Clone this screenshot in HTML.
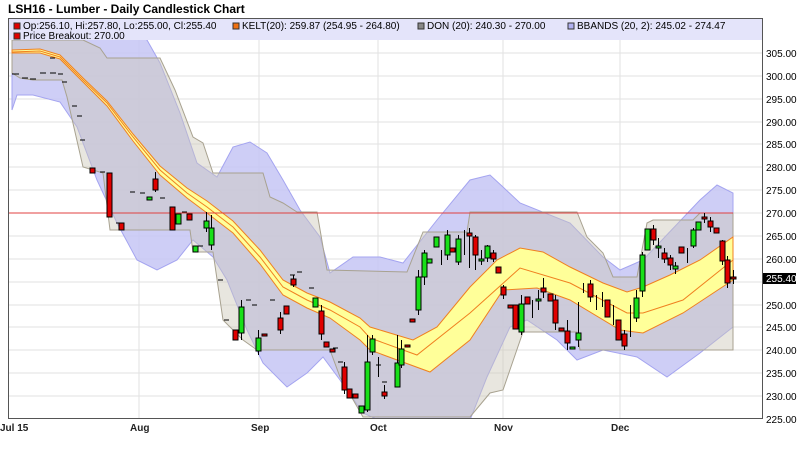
<!DOCTYPE html>
<html><head><meta charset="utf-8"><style>
body{margin:0;background:#fff;width:800px;height:454px;overflow:hidden;font-family:"Liberation Sans",sans-serif}
.r{fill:#e00000;stroke:#000}.g{fill:#18e018;stroke:#000}
</style></head><body>
<svg width="800" height="454" xmlns="http://www.w3.org/2000/svg" font-family="Liberation Sans, sans-serif">
<text x="8" y="13" font-size="12" font-weight="bold" fill="#000">LSH16 - Lumber - Daily Candlestick Chart</text>
<defs><clipPath id="c"><rect x="8" y="18" width="755" height="401"/></clipPath></defs>
<g clip-path="url(#c)">
<rect x="8" y="18" width="755" height="401" fill="#fff"/>
<g stroke="#e2e2e2" stroke-width="1">
<line x1="8" x2="763" y1="53" y2="53"/><line x1="8" x2="763" y1="76" y2="76"/><line x1="8" x2="763" y1="99" y2="99"/><line x1="8" x2="763" y1="122" y2="122"/><line x1="8" x2="763" y1="144" y2="144"/><line x1="8" x2="763" y1="167" y2="167"/><line x1="8" x2="763" y1="190" y2="190"/><line x1="8" x2="763" y1="213" y2="213"/><line x1="8" x2="763" y1="236" y2="236"/><line x1="8" x2="763" y1="259" y2="259"/><line x1="8" x2="763" y1="282" y2="282"/><line x1="8" x2="763" y1="305" y2="305"/><line x1="8" x2="763" y1="327" y2="327"/><line x1="8" x2="763" y1="350" y2="350"/><line x1="8" x2="763" y1="373" y2="373"/><line x1="8" x2="763" y1="396" y2="396"/>
<line x1="139" x2="139" y1="18" y2="419"/><line x1="259" x2="259" y1="18" y2="419"/><line x1="378" x2="378" y1="18" y2="419"/><line x1="503" x2="503" y1="18" y2="419"/><line x1="620" x2="620" y1="18" y2="419"/>
</g>
<!-- Bollinger -->
<path d="M12,10 L47,20 L100,15 L147,40 L160,63 L180,113 L197,163 L217,177 L233,147 L250,142 L267,153 L283,180 L300,210 L320,237 L330,273 L353,257 L380,257 L403,263 L437,220 L470,180 L490,175 L503,187 L520,203 L570,223 L603,257 L620,270 L643,260 L700,200 L717,185 L733,193 L733,327 L700,353 L667,377 L637,357 L603,350 L577,360 L557,340 L527,320 L510,327 L487,377 L470,420 L440,440 L400,430 L363,413 L340,380 L323,357 L307,373 L287,387 L263,363 L247,330 L227,280 L213,257 L193,240 L177,260 L157,270 L137,260 L117,223 L97,180 L77,127 L60,102 L33,95 L17,95 L12,110 Z" fill="#c6c6f4" fill-opacity="0.85" stroke="#a4a4f0"/>
<!-- Donchian -->
<path d="M12,40 L83,40 L100,48 L107,58 L160,58 L175,90 L193,137 L203,143 L213,173 L263,173 L270,197 L283,203 L297,212 L317,212 L327,270 L407,272 L423,232 L467,232 L470,212 L577,212 L587,237 L603,253 L613,277 L637,277 L647,223 L653,220 L693,220 L700,213 L733,213 L733,350 L580,350 L577,332 L523,332 L503,390 L490,393 L470,417 L363,417 L340,377 L330,350 L257,350 L243,340 L223,320 L213,252 L193,252 L190,230 L110,230 L103,173 L83,167 L67,97 L62,80 L33,80 L20,78 L12,73 Z" fill="#cdc8b8" fill-opacity="0.45" stroke="#a8a290"/>
<!-- Keltner -->
<path d="M12,50 L40,49 L60,55 L83,78 L107,101 L133,134 L160,166 L187,188 L207,201 L233,221 L260,250 L283,280 L307,293 L330,302 L360,318 L370,327 L413,340 L437,327 L470,287 L497,260 L520,248 L543,252 L570,267 L603,283 L627,292 L643,287 L670,275 L700,260 L733,237 L733,280 L683,313 L643,333 L620,330 L570,300 L537,288 L503,290 L470,340 L430,372 L370,350 L360,340 L330,318 L307,308 L283,295 L260,264 L233,233 L207,213 L187,198 L160,175 L133,141 L107,106 L83,82 L60,59 L40,53 L12,53 Z" fill="#ffff99" stroke="#f08020"/>
<path d="M12,52 L40,51 L60,57 L83,80 L107,103 L133,137 L160,170 L187,193 L207,207 L233,227 L260,257 L283,287 L307,300 L330,310 L360,327 L370,338 L417,355 L470,313 L520,268 L570,283 L627,313 L643,313 L683,300 L733,260" fill="none" stroke="#f08020"/>
<line x1="8" x2="733" y1="213" y2="213" stroke="#e04040"/>
<!-- candles -->
<g stroke="#000" stroke-width="1">
<path d="M12,74h7M22,78h6M30,79h6M40,73h6M50,73h6M58,74h5M50,58h5M62,82h5M72,106h5M77,116h5M80,140h5M100,172h5M116,223h5M130,192h5M140,193h5M160,198h5M182,212h5M198,246h5M218,280h5M224,320h5M246,300h5M252,305h5M270,300h5M290,275h5M297,272h5M309,288h5M333,348h5M338,362h5M376,365h5M382,382h5"/>
<path d="M155.5,172v20M211.5,215v35M206.5,212v20M241.5,300v40M258.5,330v25M280.5,312v22M293.5,275v12M321.5,305v35M344.5,362v32M367.5,335v77M372.5,335v20M378.5,357v20M384.5,385v14M397.5,335v30M401.5,340v28M418.5,270v45M424.5,250v35M441.5,250v15M447.5,230v30M458.5,235v30M464.5,230v25M469.5,228v40M475.5,235v35M481.5,250v15M487.5,245v17M493.5,250v12M503.5,285v14M521.5,295v40M532.5,300v18M538.5,290v20M543.5,278v20M555.5,295v35M567.5,320v30M578.5,302v45M583.5,283v10M590.5,280v22M596.5,295v15M602.5,292v15M613.5,305v20M624.5,330v20M630.5,305v32M636.5,290v32M642.5,252v45M653.5,225v20M658.5,238v20M664.5,248v15M670.5,255v15M675.5,262v12M687.5,248v15M693.5,228v20M704.5,213v10M710.5,217v15M722.5,240v25M727.5,256v32M733.5,270v14"/>
<rect class="r" x="90" y="168" width="5" height="5"/><rect class="r" x="107" y="173" width="5" height="44"/><rect class="r" x="119" y="223" width="5" height="7"/><rect class="g" x="147" y="197" width="5" height="3"/><rect class="r" x="153" y="179" width="5" height="11"/><rect class="r" x="170" y="207" width="5" height="23"/><rect class="g" x="176" y="214" width="5" height="10"/><rect class="r" x="187" y="214" width="5" height="6"/><rect class="g" x="193" y="246" width="5" height="6"/><rect class="g" x="204" y="221" width="5" height="7"/><rect class="g" x="209" y="228" width="5" height="17"/>
<rect class="r" x="233" y="330" width="5" height="10"/><rect class="g" x="239" y="307" width="5" height="26"/><rect class="g" x="256" y="338" width="5" height="13"/><rect class="r" x="262" y="334" width="5" height="2"/><rect class="r" x="278" y="318" width="5" height="12"/><rect class="r" x="284" y="306" width="5" height="8"/><rect class="r" x="291" y="279" width="5" height="6"/><rect class="g" x="313" y="298" width="5" height="9"/><rect class="r" x="319" y="311" width="5" height="23"/><rect class="r" x="324" y="342" width="5" height="5"/><rect class="r" x="330" y="349" width="5" height="3"/><rect class="r" x="342" y="367" width="5" height="23"/><rect class="r" x="347" y="389" width="5" height="9"/><rect class="r" x="353" y="394" width="5" height="4"/><rect class="g" x="359" y="406" width="5" height="7"/><rect class="g" x="365" y="362" width="5" height="48"/><rect class="g" x="370" y="339" width="5" height="13"/><rect class="r" x="382" y="392" width="5" height="4"/>
<rect class="g" x="395" y="363" width="5" height="24"/><rect class="g" x="399" y="349" width="5" height="16"/><rect class="r" x="405" y="345" width="5" height="2"/><rect class="r" x="410" y="319" width="5" height="3"/><rect class="g" x="416" y="277" width="5" height="33"/><rect class="g" x="422" y="253" width="5" height="24"/><rect class="g" x="427" y="259" width="5" height="4"/><rect class="g" x="434" y="237" width="5" height="10"/><rect class="g" x="445" y="235" width="5" height="20"/><rect class="r" x="450" y="248" width="5" height="4"/><rect class="g" x="456" y="239" width="5" height="23"/><rect class="r" x="467" y="233" width="5" height="3"/><rect class="r" x="473" y="237" width="5" height="18"/><rect class="g" x="479" y="259" width="5" height="2"/><rect class="g" x="485" y="246" width="5" height="12"/><rect class="r" x="491" y="253" width="5" height="6"/><rect class="r" x="496" y="267" width="5" height="6"/><rect class="r" x="501" y="287" width="5" height="8"/>
<rect class="r" x="508" y="305" width="5" height="3"/><rect class="r" x="513" y="305" width="5" height="24"/><rect class="g" x="519" y="304" width="5" height="28"/><rect class="r" x="525" y="297" width="5" height="7"/><rect class="g" x="536" y="299" width="5" height="2"/><rect class="r" x="541" y="288" width="5" height="4"/><rect class="r" x="548" y="294" width="5" height="7"/><rect class="r" x="553" y="300" width="5" height="23"/><rect class="r" x="559" y="328" width="5" height="3"/><rect class="r" x="565" y="331" width="5" height="12"/><rect class="g" x="570" y="347" width="5" height="2"/><rect class="g" x="576" y="333" width="5" height="7"/><rect class="r" x="588" y="284" width="5" height="13"/><rect class="r" x="605" y="300" width="5" height="17"/><rect class="r" x="616" y="320" width="5" height="20"/><rect class="r" x="622" y="334" width="5" height="12"/><rect class="g" x="634" y="298" width="5" height="20"/><rect class="g" x="640" y="255" width="5" height="36"/><rect class="g" x="645" y="229" width="5" height="21"/><rect class="r" x="651" y="229" width="5" height="11"/><rect class="g" x="656" y="246" width="5" height="2"/><rect class="r" x="662" y="253" width="5" height="6"/><rect class="r" x="668" y="258" width="5" height="7"/><rect class="g" x="673" y="266" width="5" height="3"/><rect class="r" x="679" y="247" width="5" height="6"/><rect class="g" x="691" y="230" width="5" height="16"/><rect class="g" x="696" y="222" width="5" height="8"/><rect class="r" x="702" y="217" width="5" height="2"/><rect class="r" x="708" y="221" width="5" height="6"/><rect class="r" x="714" y="228" width="5" height="5"/><rect class="r" x="720" y="241" width="5" height="20"/><rect class="r" x="725" y="260" width="5" height="23"/><rect class="r" x="731" y="277" width="5" height="2"/>
</g>
</g>
<rect x="8.5" y="18.5" width="754" height="400" fill="none" stroke="#555"/>
<rect x="9" y="19" width="753" height="21" fill="#e4e4fa"/>
<g font-size="10" fill="#000">
<rect x="14" y="23" width="6" height="6" fill="#e00000" stroke="#333"/><text x="23" y="29">Op:256.10, Hi:257.80, Lo:255.00, Cl:255.40</text>
<rect x="233" y="23" width="6" height="6" fill="#f07010" stroke="#333"/><text x="242" y="29">KELT(20): 259.87 (254.95 - 264.80)</text>
<rect x="418" y="23" width="6" height="6" fill="#888" stroke="#333"/><text x="427" y="29">DON (20): 240.30 - 270.00</text>
<rect x="568" y="23" width="6" height="6" fill="#b0b0f0" stroke="#333"/><text x="577" y="29">BBANDS (20, 2): 245.02 - 274.47</text>
<rect x="14" y="33" width="6" height="6" fill="#e00000" stroke="#333"/><text x="23" y="39">Price Breakout: 270.00</text>
</g>
<g font-size="10" fill="#000">
<text x="766" y="57">305.00</text><text x="766" y="80">300.00</text><text x="766" y="103">295.00</text><text x="766" y="126">290.00</text><text x="766" y="148">285.00</text><text x="766" y="171">280.00</text><text x="766" y="194">275.00</text><text x="766" y="217">270.00</text><text x="766" y="240">265.00</text><text x="766" y="263">260.00</text>
<rect x="763" y="273" width="33" height="11" fill="#000"/><text x="766" y="282" fill="#fff">255.40</text>
<text x="766" y="309">250.00</text><text x="766" y="331">245.00</text><text x="766" y="354">240.00</text><text x="766" y="377">235.00</text><text x="766" y="400">230.00</text><text x="766" y="423">225.00</text>
</g>
<g font-size="10" font-weight="bold" fill="#222">
<text x="0" y="431">Jul 15</text><text x="130" y="431">Aug</text><text x="251" y="431">Sep</text><text x="370" y="431">Oct</text><text x="494" y="431">Nov</text><text x="611" y="431">Dec</text>
</g>
</svg>
</body></html>
